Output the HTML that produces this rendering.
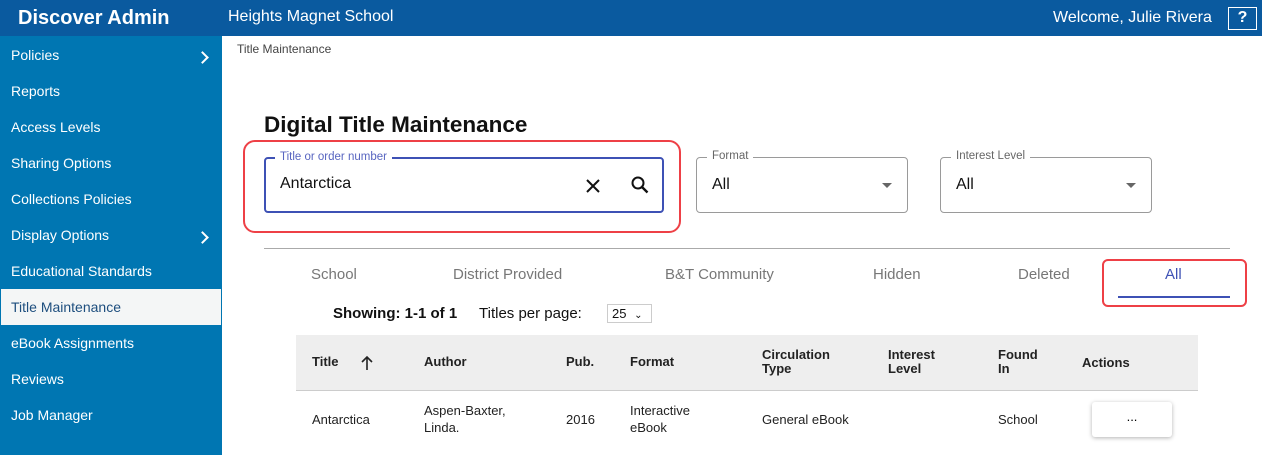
<!DOCTYPE html>
<html><head><style>
*{margin:0;padding:0;box-sizing:border-box}
body{width:1262px;height:455px;overflow:hidden;background:#fff;font-family:"Liberation Sans",sans-serif;position:relative}
.hdr{position:absolute;left:0;top:0;width:1262px;height:36px;background:#0a5a9f;color:#fff}
.abs{position:absolute;white-space:nowrap}
.side{position:absolute;left:0;top:36px;width:222px;height:419px;background:#0076b2}
.side div{position:absolute;left:11px;color:#fff;font-size:14px}
.chev{position:absolute;left:198px;width:9px;height:9px;border-right:2.5px solid #fff;border-top:2.5px solid #fff;transform:rotate(45deg)}
.fs{position:absolute;border:1px solid #9a9a9a;border-radius:4px}
.lbl{position:absolute;top:-8px;left:10px;background:#fff;padding:0 5px;font-size:11.5px;color:#666}
.tab{position:absolute;top:266px;font-size:15px;color:#777}
.th{position:absolute;font-size:13px;font-weight:bold;color:#222;line-height:14px}
.td{position:absolute;font-size:13px;color:#222;line-height:17px}
</style></head><body>
<div class="hdr">
<div class="abs" style="left:18px;top:7px;font-size:20px;font-weight:bold">Discover Admin</div>
<div class="abs" style="left:228px;top:8px;font-size:16px">Heights Magnet School</div>
<div class="abs" style="left:1053px;top:9px;font-size:16px">Welcome, Julie Rivera</div>
<div class="abs" style="left:1228px;top:7px;width:29px;height:23px;border:1.5px solid #fff;text-align:center;font-weight:bold;font-size:16px;line-height:20px">?</div>
</div>
<div class="side">
<div style="top:11px">Policies</div><span class="chev" style="top:17px"></span>
<div style="top:47px">Reports</div>
<div style="top:83px">Access Levels</div>
<div style="top:119px">Sharing Options</div>
<div style="top:155px">Collections Policies</div>
<div style="top:191px">Display Options</div><span class="chev" style="top:197px"></span>
<div style="top:227px">Educational Standards</div>
<div style="left:1px;top:253px;width:220px;height:36px;background:#f4f6f6"></div>
<div style="top:263px;color:#1d4e7e">Title Maintenance</div>
<div style="top:299px">eBook Assignments</div>
<div style="top:335px">Reviews</div>
<div style="top:371px">Job Manager</div>
</div>
<div class="abs" style="left:237px;top:42px;font-size:12px;color:#444">Title Maintenance</div>
<div class="abs" style="left:264px;top:112px;font-size:22.5px;font-weight:bold;color:#111">Digital Title Maintenance</div>
<div class="abs" style="left:243px;top:140px;width:438px;height:93px;border:2.5px solid #ee4046;border-radius:12px"></div>
<div class="fs" style="left:264px;top:157px;width:400px;height:56px;border:2px solid #3e51b5"><span class="lbl" style="color:#5865c0;left:9px">Title or order number</span>
<div class="abs" style="left:14px;top:16px;font-size:16px;color:#111">Antarctica</div>
<svg class="abs" style="left:318px;top:18px" width="18" height="18" viewBox="0 0 18 18"><path d="M3 3L15 15M15 3L3 15" stroke="#111" stroke-width="2"/></svg>
<svg class="abs" style="left:364px;top:16px" width="20" height="20" viewBox="0 0 20 20"><circle cx="8" cy="8" r="5.5" stroke="#111" stroke-width="2" fill="none"/><path d="M12 12L17.5 17.5" stroke="#111" stroke-width="2.4"/></svg>
</div>
<div class="fs" style="left:696px;top:157px;width:212px;height:56px"><span class="lbl">Format</span>
<div class="abs" style="left:15px;top:18px;font-size:16px;color:#111">All</div>
<div class="abs" style="left:185px;top:25px;border:5px solid transparent;border-top:5px solid #666"></div></div>
<div class="fs" style="left:940px;top:157px;width:212px;height:56px"><span class="lbl">Interest Level</span>
<div class="abs" style="left:15px;top:18px;font-size:16px;color:#111">All</div>
<div class="abs" style="left:185px;top:25px;border:5px solid transparent;border-top:5px solid #666"></div></div>
<div class="abs" style="left:264px;top:248px;width:966px;height:1px;background:#aaa"></div>
<div class="tab" style="left:311px">School</div>
<div class="tab" style="left:453px">District Provided</div>
<div class="tab" style="left:665px">B&amp;T Community</div>
<div class="tab" style="left:873px">Hidden</div>
<div class="tab" style="left:1018px">Deleted</div>
<div class="tab" style="left:1165px;color:#3e51b5">All</div>
<div class="abs" style="left:1118px;top:296px;width:112px;height:2px;background:#3e51b5"></div>
<div class="abs" style="left:1102px;top:259px;width:145px;height:48px;border:2.5px solid #ee4046;border-radius:6px"></div>
<div class="abs" style="left:333px;top:305px;font-size:15px;font-weight:bold;color:#111">Showing: 1-1 of 1</div>
<div class="abs" style="left:479px;top:305px;font-size:15px;color:#111">Titles per page:</div>
<div class="abs" style="left:607px;top:304px;width:45px;height:19px;border:1px solid #ccc;font-size:13px;padding:1px 4px;color:#111">25 <span style="font-size:10px;margin-left:4px">&#8964;</span></div>
<div class="abs" style="left:296px;top:335px;width:902px;height:56px;background:#eee;border-bottom:1px solid #ccc"></div>
<div class="th" style="left:312px;top:355px">Title</div>
<svg class="abs" style="left:360px;top:355px" width="14" height="16" viewBox="0 0 14 16"><path d="M7 15V2M2 7L7 2L12 7" stroke="#222" stroke-width="1.6" fill="none"/></svg>
<div class="th" style="left:424px;top:355px">Author</div>
<div class="th" style="left:566px;top:355px">Pub.</div>
<div class="th" style="left:630px;top:355px">Format</div>
<div class="th" style="left:762px;top:348px">Circulation<br>Type</div>
<div class="th" style="left:888px;top:348px">Interest<br>Level</div>
<div class="th" style="left:998px;top:348px">Found<br>In</div>
<div class="th" style="left:1082px;top:356px">Actions</div>
<div class="td" style="left:312px;top:411px">Antarctica</div>
<div class="td" style="left:424px;top:402px">Aspen-Baxter,<br>Linda.</div>
<div class="td" style="left:566px;top:411px">2016</div>
<div class="td" style="left:630px;top:402px">Interactive<br>eBook</div>
<div class="td" style="left:762px;top:411px">General eBook</div>
<div class="td" style="left:998px;top:411px">School</div>
<div class="abs" style="left:1092px;top:402px;width:80px;height:35px;background:#fff;border-radius:3px;box-shadow:0 1px 4px rgba(0,0,0,.3);text-align:center;font-size:13px;line-height:30px">...</div>
</body></html>
